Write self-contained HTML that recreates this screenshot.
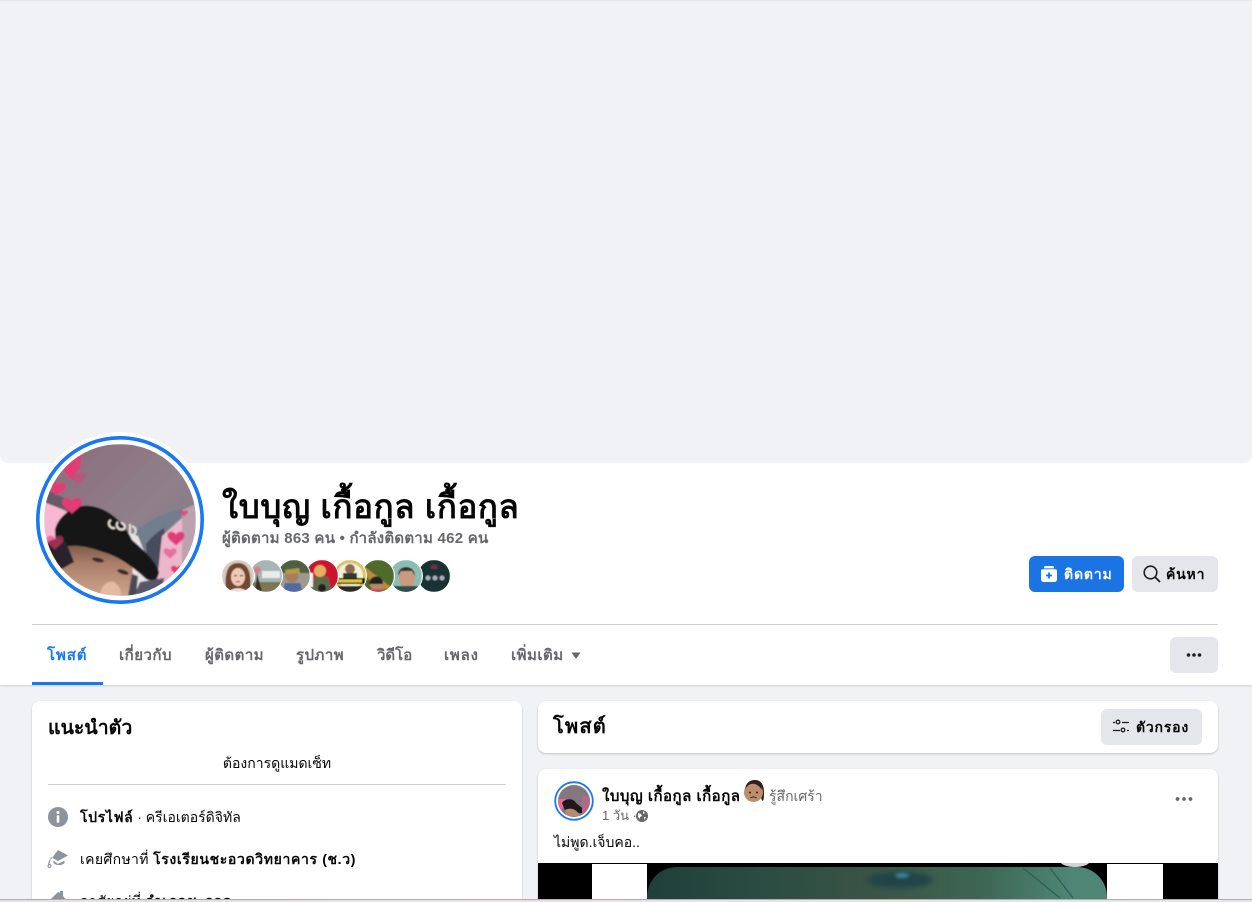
<!DOCTYPE html>
<html lang="th"><head><meta charset="utf-8"><title>ใบบุญ เกื้อกูล เกื้อกูล</title>
<style>
*{box-sizing:border-box}
html,body{margin:0;padding:0;width:1252px;height:902px;overflow:hidden}
body{position:relative;background:#f0f2f5;font-family:"Liberation Sans","Noto Sans CJK SC",sans-serif;color:#050505}
#w{position:absolute;left:0;top:0;width:1252px;height:902px;overflow:hidden;background:#f0f2f5}
.abox{position:absolute}
.t{position:absolute;white-space:nowrap;line-height:20px}
.n{font-size:15px;font-weight:700;color:#65676b;top:646px;letter-spacing:.5px}
b{letter-spacing:.65px}
</style></head><body><div id="w">
<div class="abox" style="left:0;top:0;width:1252px;height:685px;background:#fff;box-shadow:0 1px 2px rgba(0,0,0,.15)"></div>
<div class="abox" style="left:0;top:0;width:1252px;height:463px;background:#f0f2f5;border-radius:0 0 8px 8px;border-top:1px solid #e4e5ea"></div>

<!-- avatar -->
<svg class="abox" style="left:32px;top:432px" width="176" height="176" viewBox="0 0 176 176">
<defs><clipPath id="c"><circle cx="88" cy="88" r="76"/></clipPath><filter id="b"><feGaussianBlur stdDeviation=".7"/></filter>
<linearGradient id="g1" x1="0" y1="0" x2="1" y2="1"><stop offset="0" stop-color="#8a6b79"/><stop offset=".55" stop-color="#8f808a"/><stop offset="1" stop-color="#7d7680"/></linearGradient>
<linearGradient id="f1" x1="0" y1="0" x2="0" y2="1"><stop offset="0" stop-color="#6d4c3f"/><stop offset=".4" stop-color="#a87c66"/><stop offset="1" stop-color="#cfa48c"/></linearGradient>
<path id="h" d="M0 9C-3 5-10 2-10-3-10-8-3-9 0-4 3-9 10-8 10-3 10 2 3 5 0 9Z"/></defs>
<circle cx="88" cy="88" r="88" fill="#fff"/>
<circle cx="88" cy="88" r="82.200" fill="#fff" stroke="#1877f2" stroke-width="3.600"/>
<g clip-path="url(#c)"><g filter="url(#b)" transform="translate(12 12)">
<rect width="152" height="152" fill="url(#g1)"/>
<path d="M0 44 L36 62 L52 72 L14 100 L0 104Z" fill="#665a66"/>
<path d="M0 58 L20 66 L30 72 L14 96 L0 100Z" fill="#f5b8d0"/>
<path d="M84 92 C100 80 120 66 145 64 L152 66 L152 152 L84 152Z" fill="#727d8e"/>
<path d="M102 100 C108 92 116 86 120 84 L122 100 L116 142 L104 144Z" fill="#474e5d"/>
<path d="M118 92 L140 72 L140 140 L112 146Z" fill="#ecb6cb"/>
<path d="M138 66 L152 60 L152 122 L138 124Z" fill="#baa3ae"/>
<path d="M72 84 L94 92 L102 112 L108 146 L80 150Z" fill="#e9e1e4"/>
<path d="M2 102 C8 94 24 94 40 98 L88 118 L90 152 L34 152 C24 140 10 120 2 102Z" fill="url(#f1)"/>
<path d="M11 86 C14 72 30 60 46 62 C64 64 80 78 88 96 C100 106 112 118 115 128 C114 136 108 138 102 135 C88 122 74 112 59 108 C45 103 32 100 19 103 L12 104Z" fill="#141316"/>
<path d="M2 100 C8 94 14 94 22 98 L30 118 L16 126Z" fill="#2b2429"/>
<ellipse cx="54" cy="116" rx="6" ry="2.200" fill="#3c2a26" transform="rotate(12 54 116)"/>
<ellipse cx="79" cy="128" rx="6" ry="2.200" fill="#3c2a26" transform="rotate(18 79 128)"/>
<path d="M56 152 C56 142 64 136 70 138 C76 142 78 148 76 152Z" fill="#e6b9a2"/>
<path d="M84 152 L88 130 L94 132 L92 152Z" fill="#4a4852"/>
<path d="M90 152 L96 138 L120 134 L118 152Z" fill="#55566a"/>
<g fill="#e23a74">
<path d="M17 22 L38 10 L36 24 L26 36Z"/>
<use href="#h" transform="translate(34 34) scale(.75)" opacity=".55"/>
<use href="#h" transform="translate(13 44) scale(.85) rotate(10)"/>
<use href="#h" transform="translate(28 61) scale(1)"/>
<use href="#h" transform="translate(11 98) scale(.85)" opacity=".6"/>
<use href="#h" transform="translate(132 94) scale(.85)"/>
<use href="#h" transform="translate(126 109) scale(.65)" opacity=".55"/>
<use href="#h" transform="translate(133 126) scale(.6)"/>
<use href="#h" transform="translate(140 69) scale(.4)" opacity=".8"/>
</g>
<path d="M67 76 C63 78 65 85 71 84 M74 78 C71 81 74 87 80 85 C82 83 80 79 77 79 M86 80 L86 90 M88 82 C93 84 93 90 88 91" stroke="#e8e4dc" stroke-width="2" fill="none"/>
</g></g>
</svg>

<div class="t" style="left:222px;top:487px;font-size:33px;font-weight:700;line-height:40px;color:#050505;letter-spacing:.65px">ใบบุญ เกื้อกูล เกื้อกูล</div>
<div class="t" style="left:222px;top:529px;font-size:15px;font-weight:700;color:#65676b;letter-spacing:.25px">ผู้ติดตาม 863 คน • กำลังติดตาม 462 คน</div>

<!-- friend avatars -->
<svg class="abox" style="left:220px;top:558px" width="234" height="36" viewBox="0 0 234 36">
<defs><clipPath id="k"><circle cx="0" cy="0" r="16"/></clipPath><filter id="s"><feGaussianBlur stdDeviation=".5"/></filter></defs>
<g transform="translate(214 18)"><circle r="17" fill="#fff"/><g clip-path="url(#k)"><g filter="url(#s)"><rect x="-16" y="-16" width="32" height="32" fill="#123330"/><circle cx="-6" cy="2" r="2.500" fill="#aab"/><circle cx="1" cy="2" r="2.500" fill="#aab"/><circle cx="8" cy="2" r="2.500" fill="#aab"/><rect x="-3" y="-11" width="6" height="4" fill="#7a2a40"/></g></g></g>
<g transform="translate(186 18)"><circle r="17" fill="#fff"/><g clip-path="url(#k)"><g filter="url(#s)"><rect x="-16" y="-16" width="32" height="32" fill="#8dbdb2"/><ellipse cx="1" cy="2" rx="8" ry="10" fill="#c99a7e"/><path d="M-8 0C-9-12 9-12 9 0L6-5-5-5Z" fill="#333"/><rect x="-16" y="10" width="32" height="8" fill="#2f4f50"/></g></g></g>
<g transform="translate(158 18)"><circle r="17" fill="#fff"/><g clip-path="url(#k)"><g filter="url(#s)"><rect x="-16" y="-16" width="32" height="32" fill="#4f6b2a"/><path d="M-14-10L14 12 2 14-14-2Z" fill="#b68d3a"/><circle cx="-2" cy="8" r="6" fill="#b88867"/><path d="M-9 8C-8-2 5-2 5 8Z" fill="#222"/><rect x="-8" y="13" width="13" height="4" fill="#c94b6a"/></g></g></g>
<g transform="translate(130 18)"><circle r="17" fill="#fff"/><g clip-path="url(#k)"><g filter="url(#s)"><rect x="-16" y="-16" width="32" height="32" fill="#d8c463"/><circle r="13" fill="#f5f0d8"/><circle cy="-7" r="5" fill="#8f6a4e"/><path d="M-7-3H7V8H-7Z" fill="#2e3a30"/><rect x="-15" y="2" width="30" height="6" fill="#111"/><rect x="-12" y="3.500" width="24" height="3" fill="#e5c62a"/><rect x="-15" y="10" width="30" height="6" fill="#2a2a20"/></g></g></g>
<g transform="translate(102 18)"><circle r="17" fill="#fff"/><g clip-path="url(#k)"><g filter="url(#s)"><rect x="-16" y="-16" width="32" height="32" fill="#c9122f"/><circle cx="-2" cy="-5" r="6" fill="#e4b060"/><path d="M-8 1H6L10 16H-10Z" fill="#5a6a4a"/><circle cx="0" cy="12" r="4" fill="#222"/><rect x="-16" y="-3" width="7" height="14" fill="#eee"/></g></g></g>
<g transform="translate(74 18)"><circle r="17" fill="#fff"/><g clip-path="url(#k)"><g filter="url(#s)"><rect x="-16" y="-16" width="32" height="32" fill="#4d6143"/><rect x="-16" y="-3" width="32" height="20" fill="#9a9a90"/><circle cx="-2" cy="0" r="6.500" fill="#a77b5e"/><path d="M-9-6L5-8 6-3-8-2Z" fill="#b59b45"/><path d="M-9 7H6L9 16H-11Z" fill="#5468a0"/></g></g></g>
<g transform="translate(46 18)"><circle r="17" fill="#fff"/><g clip-path="url(#k)"><g filter="url(#s)"><rect x="-16" y="-16" width="32" height="32" fill="#a7b5b4"/><rect x="-4" y="-5" width="18" height="7" fill="#e8ece9"/><rect x="-16" y="6" width="32" height="10" fill="#7c7656"/><circle cx="-9" cy="-6" r="3.500" fill="#d67d8c"/><path d="M-9-3L-4 16H-11Z" fill="#3c3020"/></g></g></g>
<g transform="translate(18 18)"><circle r="17" fill="#fff"/><g clip-path="url(#k)"><g filter="url(#s)"><rect x="-16" y="-16" width="32" height="32" fill="#d8cbc0"/><path d="M-12 16C-14-4-10-13 0-13 10-13 14-4 12 16Z" fill="#6f4a33"/><ellipse cy="1" rx="7" ry="9" fill="#eec9b5"/><rect x="-4" y="-1" width="3" height="1.200" fill="#444"/><rect x="2" y="-1" width="3" height="1.200" fill="#444"/><rect x="-2" y="5" width="4" height="1.200" fill="#c55"/><path d="M-9 16C-6 11 6 11 9 16Z" fill="#f3e0d6"/></g></g></g>
</svg>

<!-- buttons -->
<div class="abox" style="left:1029px;top:556px;width:95px;height:36px;background:#1b74e4;border-radius:6px"></div>
<svg class="abox" style="left:1041px;top:566px" width="16" height="16" viewBox="0 0 16 16"><path d="M3 1.200C3 .5 3.600 0 4.200 0h7.600c.6 0 1.200.5 1.200 1.200V2.400H3zM1.600 3.200h12.800c.9 0 1.600.7 1.600 1.600v8.600a2.600 2.600 0 0 1-2.600 2.600H2.600A2.600 2.600 0 0 1 0 13.400V4.800c0-.9.7-1.600 1.600-1.600z" fill="#fff"/><path d="M8 6.500v6M5 9.500h6" stroke="#1b74e4" stroke-width="1.800"/></svg>
<div class="t" style="left:1064px;top:564px;font-size:14px;font-weight:700;color:#fff;letter-spacing:.85px">ติดตาม</div>
<div class="abox" style="left:1132px;top:556px;width:86px;height:36px;background:#e4e6eb;border-radius:6px"></div>
<svg class="abox" style="left:1143px;top:565px" width="18" height="18" viewBox="0 0 18 18"><circle cx="7.500" cy="7.500" r="6.300" fill="none" stroke="#1c1e21" stroke-width="1.600"/><path d="M12 12l5 5" stroke="#1c1e21" stroke-width="1.800"/></svg>
<div class="t" style="left:1166px;top:564px;font-size:14px;font-weight:700;color:#050505;letter-spacing:.8px">ค้นหา</div>

<div class="abox" style="left:32px;top:624px;width:1186px;height:1px;background:#ced0d4"></div>

<!-- tabs -->
<div class="t n" style="left:47px;color:#1877f2;letter-spacing:.9px">โพสต์</div>
<div class="t n" style="left:119px">เกี่ยวกับ</div>
<div class="t n" style="left:205px;letter-spacing:.45px">ผู้ติดตาม</div>
<div class="t n" style="left:296px;letter-spacing:.45px">รูปภาพ</div>
<div class="t n" style="left:377px;letter-spacing:0">วิดีโอ</div>
<div class="t n" style="left:444px;letter-spacing:.8px">เพลง</div>
<div class="t n" style="left:511px">เพิ่มเติม</div>
<svg class="abox" style="left:571px;top:652px" width="10" height="7" viewBox="0 0 10 7"><path d="M.5.500h9L5.800 6a1 1 0 0 1-1.600 0z" fill="#65676b"/></svg>
<div class="abox" style="left:32px;top:682px;width:71px;height:3px;background:#1877f2"></div>
<div class="abox" style="left:1170px;top:637px;width:48px;height:36px;background:#e4e6eb;border-radius:6px"></div>
<svg class="abox" style="left:1186px;top:652px" width="16" height="6" viewBox="0 0 16 6"><circle cx="2.500" cy="3" r="1.800" fill="#1c1e21"/><circle cx="8" cy="3" r="1.800" fill="#1c1e21"/><circle cx="13.500" cy="3" r="1.800" fill="#1c1e21"/></svg>

<!-- left card -->
<div class="abox" style="left:32px;top:701px;width:490px;height:230px;background:#fff;border-radius:8px;box-shadow:0 1px 2px rgba(0,0,0,.2)"></div>
<div class="t" style="left:48px;top:716px;font-size:19.500px;line-height:24px;font-weight:700">แนะนำตัว</div>
<div class="t" style="left:48px;top:753px;width:458px;text-align:center;font-size:14px">ต้องการดูแมดเซ็ท</div>
<div class="abox" style="left:48px;top:784px;width:458px;height:1px;background:#ced0d4"></div>
<svg class="abox" style="left:48px;top:807px" width="20" height="20" viewBox="0 0 20 20"><circle cx="10" cy="10" r="10" fill="#8c939d"/><circle cx="10" cy="5.500" r="1.500" fill="#fff"/><rect x="8.700" y="8.200" width="2.600" height="7.500" rx=".8" fill="#fff"/></svg>
<div class="t" style="left:80px;top:807px;font-size:14px"><b>โปรไฟล์</b> · ครีเอเตอร์ดิจิทัล</div>
<svg class="abox" style="left:47px;top:849px" width="22" height="20" viewBox="0 0 22 20"><path d="M11 1L21 6.500 11 12 5 8.700 3.500 8v3" fill="#8c939d"/><path d="M6.500 11.500V14c1.500 2 7.500 3.500 11 0v-2.500L11 15z" fill="#8c939d"/><path d="M3 11l-1.500 4.500" stroke="#8c939d" stroke-width="1.200"/><circle cx="2.500" cy="17" r="1.500" fill="none" stroke="#8c939d"/></svg>
<div class="t" style="left:80px;top:849px;font-size:14px;letter-spacing:.35px">เคยศึกษาที่ <b>โรงเรียนชะอวดวิทยาคาร (ช.ว)</b></div>
<svg class="abox" style="left:47px;top:890px" width="22" height="12" viewBox="0 0 22 12"><path d="M1 12L11 2l2 1V1h3v5l5 6z" fill="#8c939d"/></svg>
<div class="t" style="left:80px;top:891px;font-size:14px;letter-spacing:.3px">อาศัยอยู่ที่ <b>อำเภอชะอวด</b></div>

<!-- right cards -->
<div class="abox" style="left:538px;top:701px;width:680px;height:52px;background:#fff;border-radius:8px;box-shadow:0 1px 2px rgba(0,0,0,.2)"></div>
<div class="t" style="left:553px;top:715px;font-size:20px;line-height:24px;font-weight:700;letter-spacing:1.200px">โพสต์</div>
<div class="abox" style="left:1101px;top:709px;width:101px;height:36px;background:#e4e6eb;border-radius:6px"></div>
<svg class="abox" style="left:1112px;top:719px" width="18" height="16" viewBox="0 0 18 16"><g fill="none" stroke="#1c1e21" stroke-width="1.300"><circle cx="6" cy="3" r="1.800"/><circle cx="11" cy="11" r="1.800"/><path d="M1 3.500h2M10 3.500h7M1 11.500h7M15 11.500h2"/></g></svg>
<div class="t" style="left:1136px;top:717px;font-size:14px;font-weight:700;letter-spacing:.8px">ตัวกรอง</div>

<div class="abox" style="left:538px;top:769px;width:680px;height:160px;background:#fff;border-radius:8px;box-shadow:0 1px 2px rgba(0,0,0,.2)"></div>
<svg class="abox" style="left:554px;top:781px" width="40" height="40" viewBox="0 0 40 40"><defs><clipPath id="p"><circle cx="20" cy="20" r="16"/></clipPath></defs><circle cx="20" cy="20" r="18.800" fill="#fff" stroke="#1877f2" stroke-width="1.800"/><g clip-path="url(#p)"><rect width="40" height="40" fill="#857780"/><path d="M4 18h8L6 34H4z" fill="#e66a98"/><path d="M8 22c3-5 12-5 14 0l10 8-4 2H12z" fill="#1c181c"/><path d="M11 29c5-3 12-1 15 6H12z" fill="#b98a72"/><path d="M28 15h8v22h-8z" fill="#b06a88"/></g></svg>
<div class="t" style="left:602px;top:787px;font-size:15px;font-weight:700;letter-spacing:.5px">ใบบุญ เกื้อกูล เกื้อกูล</div>
<svg class="abox" style="left:743px;top:779px" width="22" height="26" viewBox="0 0 22 26"><path d="M2 12C2 4 7 1 12 1c6 0 9 5 9 12 0 4 0 7-1 9-2-1-2-4-2-6z" fill="#2b1f1f"/><circle cx="10.500" cy="13.500" r="9.500" fill="#bd8d6c"/><path d="M2 11C4 6 8 4 12 5c3 1 5 3 7 6-1-6-4-9-8-9-5 0-8 4-9 9z" fill="#2b1f1f"/><circle cx="7" cy="13.500" r="1" fill="#222"/><circle cx="14" cy="13.500" r="1" fill="#222"/><path d="M7.500 19c1.500-1.500 4.500-1.500 6 0" stroke="#3b2a22" fill="none" stroke-width="1"/></svg>
<div class="t" style="left:769px;top:786px;font-size:14px;color:#65676b">รู้สึกเศร้า</div>
<div class="t" style="left:602px;top:806px;font-size:13px;color:#65676b">1 วัน ·</div>
<svg class="abox" style="left:636px;top:810px" width="12" height="12" viewBox="0 0 12 12"><circle cx="6" cy="6" r="6" fill="#65676b"/><path d="M2 3l3 1 1 2-2 1v2L2 7zM7 1l2 2-2 1zM8 7l2 0-2 3z" fill="#fff"/></svg>
<svg class="abox" style="left:1175px;top:796px" width="18" height="6" viewBox="0 0 18 6"><circle cx="2.500" cy="3" r="1.900" fill="#65676b"/><circle cx="9" cy="3" r="1.900" fill="#65676b"/><circle cx="15.500" cy="3" r="1.900" fill="#65676b"/></svg>
<div class="t" style="left:554px;top:832px;font-size:14px">ไม่พูด.เจ็บคอ..</div>

<!-- video -->
<div class="abox" style="left:538px;top:863px;width:680px;height:39px;background:#000;overflow:hidden">
<div class="abox" style="left:54px;top:1px;width:55px;height:38px;background:#fff"></div>
<div class="abox" style="left:569px;top:1px;width:56px;height:38px;background:#fff"></div>
<div class="abox" style="left:109px;top:4px;width:460px;height:70px;border-radius:30px 30px 0 0;background:linear-gradient(90deg,#1e4038 0%,#2a4c42 25%,#3a5546 50%,#3d6553 72%,#4e8574 92%,#4f8576 100%)"></div>
<div class="abox" style="left:329px;top:9px;width:66px;height:16px;border-radius:50%;background:#1d4046;filter:blur(3px);opacity:.85"></div>
<div class="abox" style="left:357px;top:10px;width:14px;height:5px;border-radius:50%;background:#3a86a8;filter:blur(1.500px)"></div>
<div class="abox" style="left:522px;top:-8px;width:30px;height:12px;border-radius:50%;background:#d5d5d5"></div>
<svg class="abox" style="left:480px;top:0" width="70" height="40"><path d="M5 5L42 35M32 5L55 35" stroke="#2c5f55" stroke-width="1.300" fill="none"/></svg>
</div>

<!-- bottom strip -->
<div class="abox" style="left:0;top:899px;width:1252px;height:3px;background:linear-gradient(90deg,#ecdbe4,#ecdfe8 60%,#dfe6ef);border-top:1px solid #b5aab0"></div>
</div></body></html>
